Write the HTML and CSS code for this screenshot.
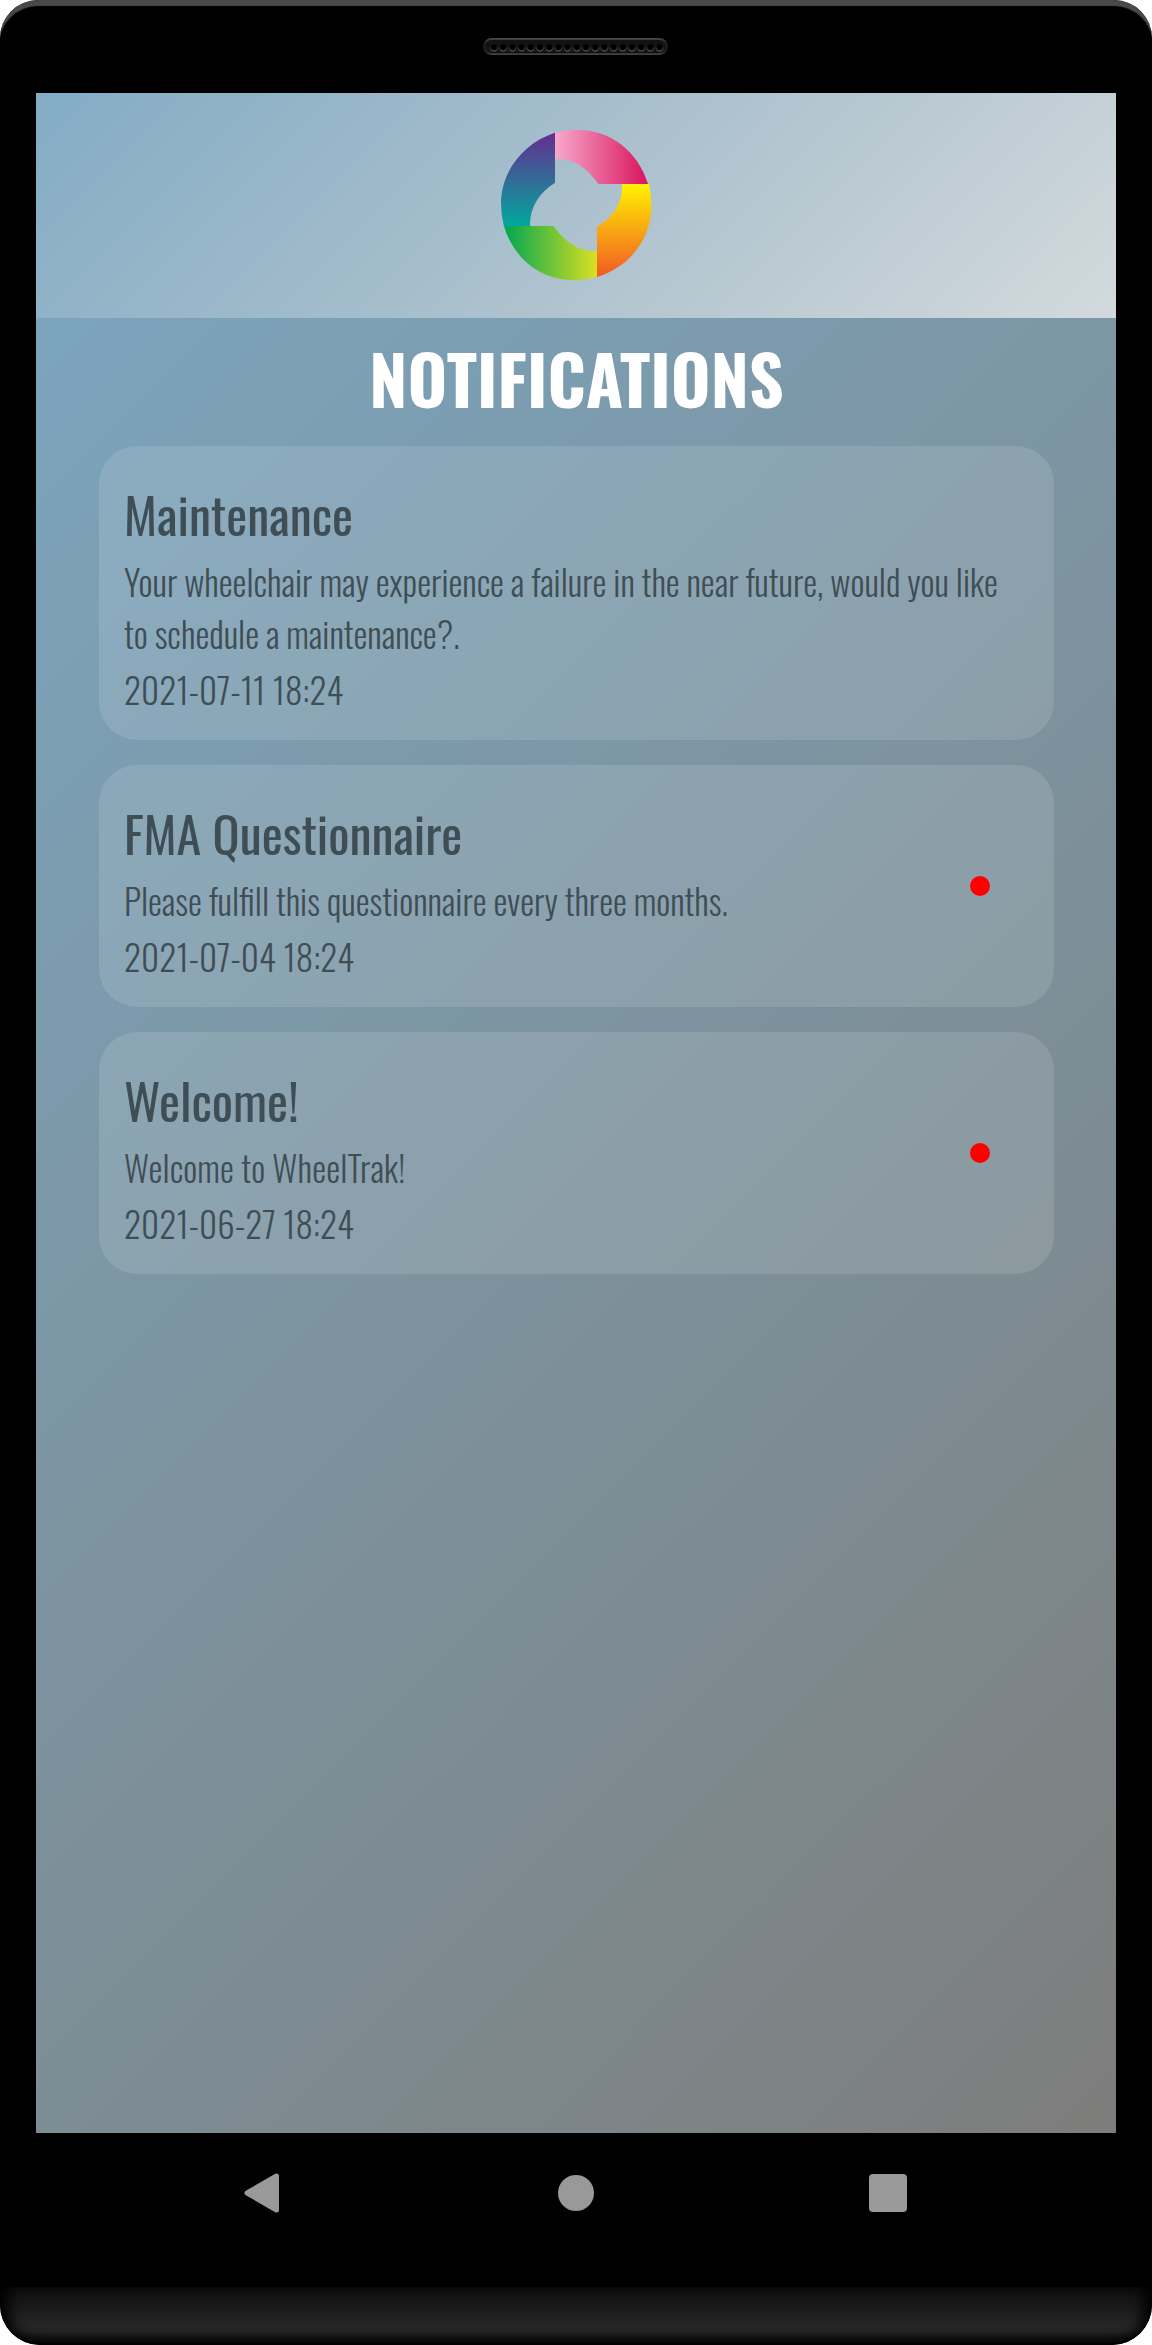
FILE: index.html
```html
<!DOCTYPE html>
<html lang="en">
<head>
<meta charset="utf-8">
<title>Notifications</title>
<link rel="stylesheet" href="styles.css">
</head>
<body>
<div class="phone">
  <div class="top-bezel">
    <svg class="speaker" width="186" height="18" viewBox="0 0 186 18">
      <defs>
        <linearGradient id="rim" x1="0" y1="0" x2="0" y2="1"><stop offset="0" stop-color="#4a4a4a"/><stop offset=".3" stop-color="#202020"/><stop offset=".8" stop-color="#202020"/><stop offset="1" stop-color="#484848"/></linearGradient>
        <linearGradient id="hole" x1="0" y1="0" x2="0" y2="1"><stop offset=".3" stop-color="#111"/><stop offset="1" stop-color="#666"/></linearGradient>
        <pattern id="holes" x="6.4" y="4" width="9.2" height="11" patternUnits="userSpaceOnUse"><circle cx="4.6" cy="5.3" r="3.6" fill="#000" stroke="url(#hole)" stroke-width="1"/></pattern>
      </defs>
      <rect x="0" y="0" width="185" height="17" rx="8.5" fill="url(#rim)"/>
      <rect x="2" y="2" width="181" height="13" rx="6.5" fill="#131313"/>
      <rect x="6.4" y="4" width="174.8" height="11" fill="url(#holes)"/>
    </svg>
  </div>
  <main class="screen">
    <header class="header">
      <svg class="logo" width="192" height="190" viewBox="0 0 576 570">
        <defs>
          <linearGradient id="purple" x1="0" y1="0" x2="0" y2="1"><stop offset="0" stop-color="#662d91"/><stop offset="1" stop-color="#00a99d"/></linearGradient>
          <linearGradient id="pink"><stop offset="0" stop-color="#f7a8cc"/><stop offset="1" stop-color="#d9145c"/></linearGradient>
          <linearGradient id="yellow" x1="0" y1="0" x2="0" y2="1"><stop offset="0" stop-color="#fff200"/><stop offset="1" stop-color="#f15a24"/></linearGradient>
          <linearGradient id="green"><stop offset="0" stop-color="#00a651"/><stop offset="1" stop-color="#d9e021"/></linearGradient>
        </defs>
        <path fill="url(#purple)" d="M225 68C130 98 63 185 63 280Q63 315 72 350H150Q148 267 225 218Z"/>
        <path fill="url(#pink)" d="M225 68Q255 60 295 60C390 60 473 122 504 222H355Q303 147 235 147L225 148Z"/>
        <path fill="url(#yellow)" d="M426 222H507Q514 250 514 285C514 390 447 472 351 501V351Q430 303 426 222Z"/>
        <path fill="url(#green)" d="M72 348H221Q273 425 351 424V501Q320 510 280 510C180 510 100 444 72 348Z"/>
      </svg>
    </header>
    <h1 class="title">NOTIFICATIONS</h1>
    <section class="list">
      <article class="card">
        <h2>Maintenance</h2>
        <p>Your wheelchair may experience a failure in the near future, would you like<br>to schedule a maintenance?.</p>
        <time>2021-07-11 18:24</time>
      </article>
      <article class="card">
        <h2>FMA Questionnaire</h2>
        <p>Please fulfill this questionnaire every three months.</p>
        <time>2021-07-04 18:24</time>
        <span class="dot"></span>
      </article>
      <article class="card">
        <h2>Welcome!</h2>
        <p class="short">Welcome to WheelTrak!</p>
        <time>2021-06-27 18:24</time>
        <span class="dot"></span>
      </article>
    </section>
  </main>
  <nav class="nav">
    <svg width="42" height="42" viewBox="0 0 42 42"><path d="M35.5 4V38L6 21Z" fill="#999" stroke="#999" stroke-width="5" stroke-linejoin="round"/></svg>
    <span class="home"></span>
    <span class="recent"></span>
  </nav>
  <div class="chin"></div>
</div>
</body>
</html>
```
FILE: styles.css
```css
* { box-sizing: border-box; }
body { margin: 0; background: #fff; font-family: "Oswald", "Open Sans", sans-serif; }
svg { display: block; flex: none; }
.phone {
  width: 1152px; height: 2345px; display: flex; flex-direction: column; align-items: center;
  background: #000; border-radius: 38px 38px 40px 40px; overflow: hidden;
}
.top-bezel {
  width: 1152px; height: 93px; padding-top: 38px; display: flex; justify-content: center; align-items: flex-start;
  border-radius: 38px 38px 0 0; box-shadow: inset 0 7px 1px -1px #494949;
}
.screen {
  width: 1080px; height: 2040px; display: flex; flex-direction: column; align-items: center;
  background: linear-gradient(135deg, #7ba7c2, #7d939f 50%, #7d8b92 70%, #7d7d7b);
}
.header {
  width: 100%; height: 225px; padding-top: 17px; display: flex; justify-content: center; align-items: flex-start;
  background: linear-gradient(135deg, rgba(255,255,255,.06), rgba(255,253,251,.66));
}
.title { margin: 0; padding: 9px 0 0 1px; height: 127.6px; color: #fff; font-size: 68px; line-height: 102px; font-weight: 700; }
.list { display: flex; flex-direction: column; gap: 24.25px; }
.card {
  position: relative; width: 955px; padding: 30.3px 25px 25.3px 25.5px; border-radius: 38px;
  background: rgba(255,255,255,.12); display: flex; flex-direction: column; color: #3f4e55;
  white-space: nowrap; font-size: 35px; line-height: 52px; font-weight: 300;
}
.card h2 { margin: 0 0 5.2px; font-size: 50px; line-height: 74px; font-weight: 400; }
.card p { margin: 0 0 4px; word-spacing: -.25px; }
.card p.short { letter-spacing: .18px; }
.card time { letter-spacing: .13px; }
.dot { position: absolute; right: 63.5px; top: 50%; width: 20px; height: 20px; margin-top: -10px; border-radius: 50%; background: #f00; }
.nav { width: 1152px; height: 154px; padding: 0 245px 34px 241px; display: flex; align-items: center; justify-content: space-between; }
.home { width: 36px; height: 36px; border-radius: 50%; background: #999; }
.recent { width: 38px; height: 38px; border-radius: 4px; background: #999; }
.chin {
  width: 1152px; height: 58px; border-radius: 0 0 40px 40px;
  background: linear-gradient(#0c0c0c, #262626 66%, #242424 75%, #000);
  box-shadow: inset 16px 0 14px -8px #000, inset -16px 0 14px -8px #000;
}
```
